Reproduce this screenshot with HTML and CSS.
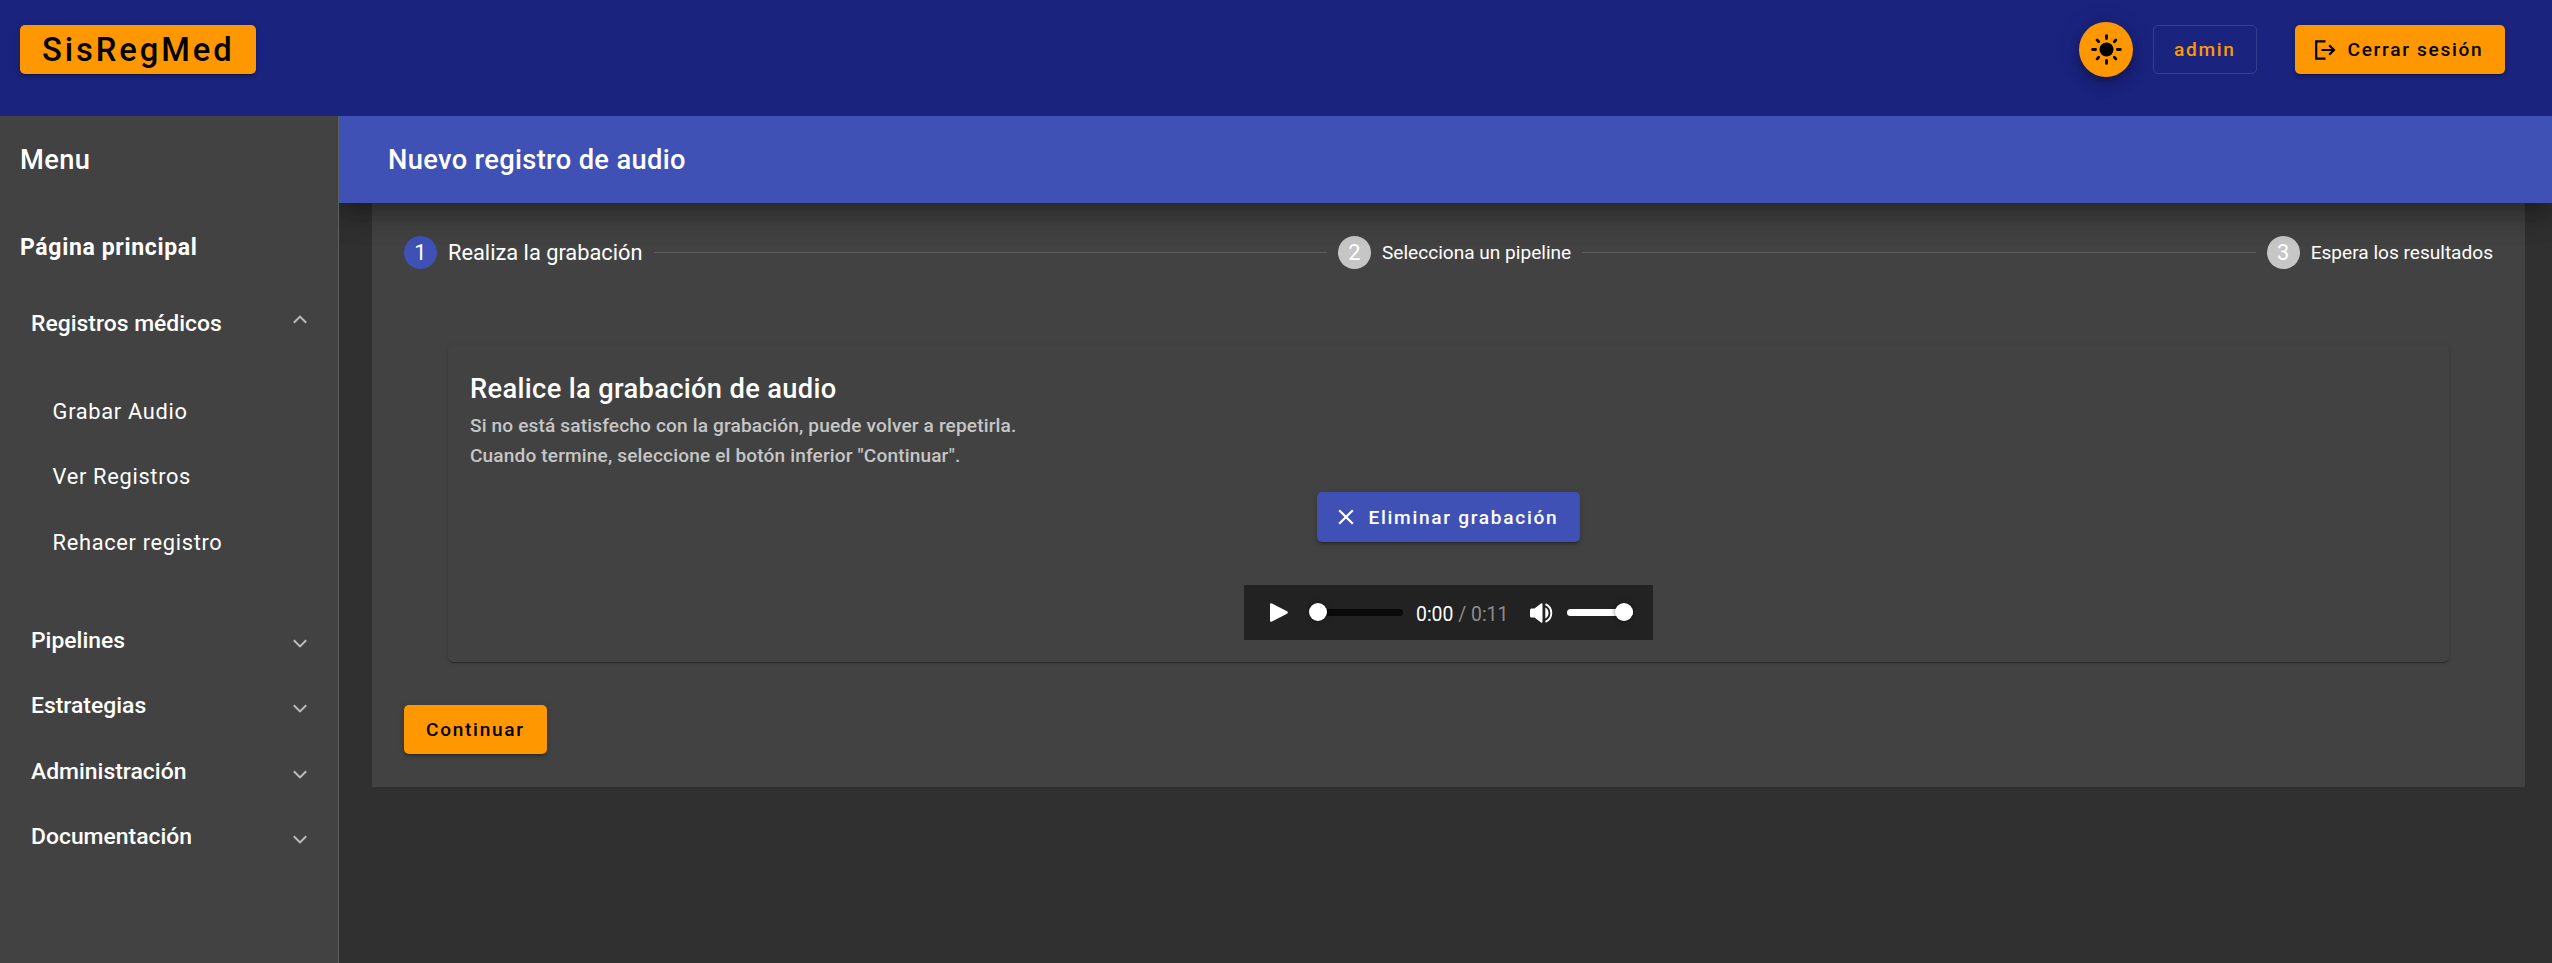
FILE: index.html
```html
<!DOCTYPE html>
<html lang="es">
<head>
<meta charset="utf-8">
<title>SisRegMed</title>
<link rel="stylesheet" href="styles.css">
</head>
<body>
<header class="topbar">
  <button class="btn accent brand">SisRegMed</button>
  <div class="actions">
    <button class="fab" aria-label="Cambiar tema">
      <svg viewBox="0 0 33 33" width="33" height="33"><circle cx="16.5" cy="16.5" r="7"/><path d="M16.5 2.6v3M16.5 27.4v3M2.6 16.5h3M27.4 16.5h3M7.1 7.1l1.6 1.6M24.3 24.3l1.6 1.6M7.1 25.9l1.6-1.6M24.3 8.7l1.6-1.6" fill="none" stroke="#000" stroke-width="2.8" stroke-linecap="round"/></svg>
    </button>
    <button class="btn outlined">admin</button>
    <button class="btn accent logout">
      <svg viewBox="0 0 22 20" width="22" height="20"><path d="M11.5 1.4H2.2v17.2h9.3M7.5 10h12M15.2 5.2L20 10l-4.8 4.8" fill="none" stroke="#000" stroke-width="2.2"/></svg>
      <span>Cerrar sesión</span>
    </button>
  </div>
</header>
<div class="body">
  <nav class="sidebar">
    <div class="menu-title">Menu</div>
    <a class="home">Página principal</a>
    <div class="group open"><span>Registros médicos</span><svg class="chev" viewBox="0 0 14 9" width="14" height="9"><path d="M.8 7.8L7 1.6l6.2 6.2"/></svg></div>
    <div class="sub">
      <a>Grabar Audio</a>
      <a>Ver Registros</a>
      <a>Rehacer registro</a>
    </div>
    <div class="group"><span>Pipelines</span><svg class="chev" viewBox="0 0 14 9" width="14" height="9"><path d="M.8 1.2L7 7.4l6.2-6.2"/></svg></div>
    <div class="group"><span>Estrategias</span><svg class="chev" viewBox="0 0 14 9" width="14" height="9"><path d="M.8 1.2L7 7.4l6.2-6.2"/></svg></div>
    <div class="group"><span>Administración</span><svg class="chev" viewBox="0 0 14 9" width="14" height="9"><path d="M.8 1.2L7 7.4l6.2-6.2"/></svg></div>
    <div class="group"><span>Documentación</span><svg class="chev" viewBox="0 0 14 9" width="14" height="9"><path d="M.8 1.2L7 7.4l6.2-6.2"/></svg></div>
  </nav>
  <main class="main">
    <div class="page-title">Nuevo registro de audio</div>
    <section class="stepper">
      <div class="steps">
        <div class="step active"><i>1</i><span>Realiza la grabación</span></div>
        <div class="line"></div>
        <div class="step"><i>2</i><span>Selecciona un pipeline</span></div>
        <div class="line"></div>
        <div class="step"><i>3</i><span>Espera los resultados</span></div>
      </div>
      <div class="card">
        <h2>Realice la grabación de audio</h2>
        <p>Si no está satisfecho con la grabación, puede volver a repetirla.<br>Cuando termine, seleccione el botón inferior "Continuar".</p>
        <button class="btn primary">
          <svg viewBox="0 0 16 16" width="16" height="16"><path d="M1.2 1.2l13.6 13.6M14.8 1.2L1.2 14.8" stroke="#fff" stroke-width="2.2"/></svg>
          <span>Eliminar grabación</span>
        </button>
        <div class="player">
          <svg class="play" viewBox="0 0 18 19" width="18" height="19"><path d="M0 1.6Q0-.5 2 .4L17 8.3q1.8 1.2 0 2.4L2 18.6q-2 .9-2-1.2z" fill="#fff"/></svg>
          <div class="track seek"><b class="knob"></b></div>
          <div class="time">0:00 <span>/ 0:11</span></div>
          <svg class="vol" viewBox="0 0 23 20" width="23" height="20"><path d="M0 7Q0 5.5 1.500 5.500H4.500L11 .6Q12.500-.3 12.500 1.500v17q0 1.800-1.500.9L4.500 14.500H1.500Q0 14.500 0 13z" fill="#fff"/><path d="M15.300 4.500q3.200 1.800 3.200 5.500t-3.200 5.500z" fill="#fff"/><path d="M15.500 1.200q5.800 2.600 5.800 8.800t-5.800 8.800" fill="none" stroke="#fff" stroke-width="1.900"/></svg>
          <div class="track level"><b class="knob"></b></div>
        </div>
      </div>
      <button class="btn accent next">Continuar</button>
    </section>
  </main>
</div>
</body>
</html>
```
FILE: styles.css
```css
* { box-sizing: border-box; }
body {
  margin: 0;
  height: 963px;
  overflow: hidden;
  display: flex;
  flex-direction: column;
  background: #303030;
  color: #fff;
  font-family: Roboto, sans-serif;
}
svg { display: block; flex: none; }
h2, p { margin: 0; }

.btn {
  height: 49px;
  padding: 0 22px;
  border: 0;
  border-radius: 5px;
  display: flex;
  align-items: center;
  white-space: nowrap;
  font: 500 19.09px Roboto, sans-serif;
  letter-spacing: 1.705px;
  box-shadow: 0 4px 1px -3px rgba(0,0,0,.2), 0 3px 3px rgba(0,0,0,.14), 0 1px 7px rgba(0,0,0,.12);
}
.accent { background: #ff9800; color: #000; }
.primary { background: #3f51b5; color: #fff; }

.topbar {
  height: 116px;
  flex: none;
  position: relative;
  z-index: 2;
  background: #1a237e;
  padding: 22px 47px 0 20px;
  display: flex;
  justify-content: space-between;
  align-items: flex-start;
}
.brand { margin-top: 3px; width: 236px; font-size: 32.73px; letter-spacing: 2.92px; }
.actions { display: flex; align-items: center; height: 55px; }
.fab {
  width: 54px;
  height: 55px;
  padding: 0;
  border: 0;
  border-radius: 50%;
  background: #ff9800;
  display: flex;
  align-items: center;
  justify-content: center;
  box-shadow: 0 4px 7px -1px rgba(0,0,0,.2), 0 8px 14px rgba(0,0,0,.14), 0 1px 24px rgba(0,0,0,.12);
}
.outlined {
  width: 104px;
  margin: 0 38px 0 20px;
  padding: 0 20px;
  border: 1px solid rgba(255,255,255,.12);
  background: none;
  color: #ff9800;
  box-shadow: none;
}
.logout { width: 210px; padding: 0 0 0 19px; gap: 11.5px; }

.body { flex: 1; display: flex; }
.sidebar {
  width: 339px;
  flex: none;
  position: relative;
  z-index: 1;
  background: #424242;
  border-right: 1px solid #5e5e5e;
  display: flex;
  flex-direction: column;
}
.menu-title {
  height: 98.6px;
  padding: 0 20px 11px;
  display: flex;
  align-items: center;
  font-size: 27.27px;
  font-weight: 500;
  letter-spacing: .34px;
}
.home {
  height: 65.45px;
  padding-left: 20px;
  display: flex;
  align-items: center;
  font-size: 23px;
  font-weight: 700;
  letter-spacing: .66px;
}
.group {
  height: 65.45px;
  padding: 0 31px;
  display: flex;
  align-items: center;
  justify-content: space-between;
  font-size: 22.9px;
  font-weight: 500;
}
.group.open { height: 87.3px; }
.chev { margin-top: 6px; fill: none; stroke: #bcbcbc; stroke-width: 2; }
.open .chev { margin-top: -8px; }
.sub { padding: 11.4px 0 32.6px; }
.sub a {
  height: 65.45px;
  padding-left: 52.6px;
  display: flex;
  align-items: center;
  font-size: 21.82px;
  letter-spacing: .68px;
}

.main { flex: 1; display: flex; flex-direction: column; }
.page-title {
  height: 87px;
  flex: none;
  padding-left: 49px;
  display: flex;
  align-items: center;
  position: relative;
  background: #3f51b5;
  font-size: 27.27px;
  font-weight: 500;
  letter-spacing: .34px;
  box-shadow: 0 11px 14px -7px rgba(0,0,0,.2), 0 16px 23px 3px rgba(0,0,0,.14), 0 8px 30px 5px rgba(0,0,0,.12);
}
.stepper {
  margin: 0 27px 0 33px;
  height: 584px;
  padding: 33px 32px 0;
  background: #424242;
}
.steps { display: flex; align-items: center; height: 33px; }
.step { display: flex; align-items: center; gap: 11px; font-size: 19.09px; white-space: nowrap; }
.step i {
  width: 33px;
  height: 33px;
  border-radius: 50%;
  background: #c6c6c6;
  display: flex;
  align-items: center;
  justify-content: center;
  font-size: 21.82px;
  font-style: normal;
}
.step.active { font-size: 21.82px; }
.step.active i { background: #3f51b5; }
.line { flex: 1; height: 1px; margin: 0 11px; background: #5e5e5e; }
.card {
  margin: 76px 44px 43px;
  height: 317px;
  padding: 22px 22px 0;
  border-radius: 5px;
  display: flex;
  flex-direction: column;
  align-items: center;
  box-shadow: 0 3px 1px -2px rgba(0,0,0,.2), 0 1px 1px rgba(0,0,0,.14), 0 1px 4px rgba(0,0,0,.12);
}
.card h2 {
  align-self: stretch;
  font-size: 27.27px;
  font-weight: 500;
  line-height: 44px;
  letter-spacing: .34px;
}
.card p {
  align-self: stretch;
  margin-bottom: 21px;
  color: #c6c6c6;
  font-size: 19.09px;
  font-weight: 500;
  line-height: 30px;
  letter-spacing: .145px;
}
.card .btn { width: 263px; height: 50px; padding: 0 0 0 21px; gap: 14.5px; flex: none; }

.player {
  width: 409px;
  height: 55px;
  margin-top: 43px;
  padding-left: 26px;
  display: flex;
  align-items: center;
  background: #222;
}
.track { position: relative; height: 7px; border-radius: 4px; }
.seek { width: 94px; margin: 0 13px 0 21px; background: #0a0a0a; }
.level { width: 66px; margin-left: 14px; background: #fff; }
.knob {
  position: absolute;
  top: -6px;
  left: 0;
  width: 18px;
  height: 18px;
  border-radius: 50%;
  background: #fff;
  box-shadow: 0 0 4px rgba(0,0,0,.5);
}
.level .knob { left: 48px; }
.time { width: 114px; padding-top: 3px; font-size: 19.4px; white-space: nowrap; }
.time span { color: #8c8c8c; }
```
